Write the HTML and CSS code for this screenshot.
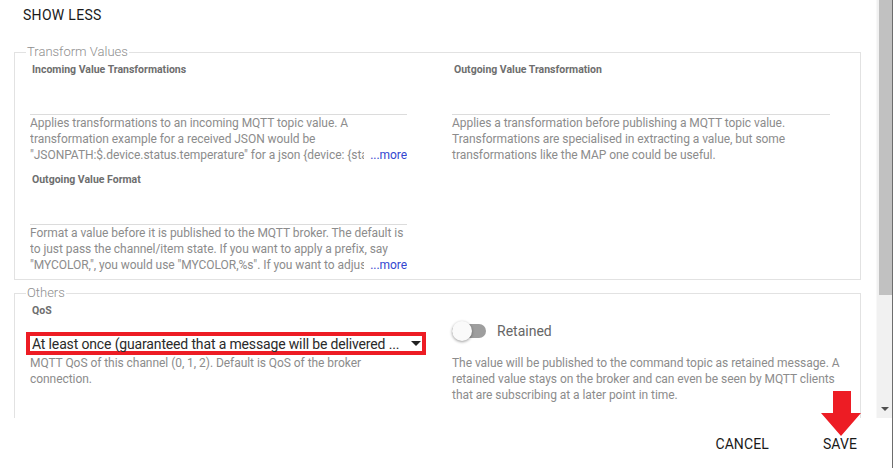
FILE: index.html
```html
<!DOCTYPE html>
<html lang="en">
  <head>
    <meta charset="UTF-8" />
    <meta name="viewport" content="width=device-width, initial-scale=1.0" />
    <title>Channel configuration</title>
    <link rel="stylesheet" href="styles.css">
  </head>
  <body>
    <div class="dialog">
      <div class="dialog-body">
        <div class="scroll-area">
          <button class="text-btn show-less">Show less</button>

          <fieldset class="group">
            <legend>Transform Values</legend>
            <div class="grid">
              <div class="field">
                <label>Incoming Value Transformations</label>
                <div class="input"></div>
                <p class="hint clamp">
                  Applies transformations to an incoming MQTT topic value. A
                  transformation example for a received JSON would be
                  "JSONPATH:$.device.status.temperature" for a json {device: {status: { temperature: 23.2 }}}.
                  <a class="more" href="#">...more</a>
                </p>
              </div>
              <div class="field">
                <label>Outgoing Value Transformation</label>
                <div class="input"></div>
                <p class="hint">
                  Applies a transformation before publishing a MQTT topic value.
                  Transformations are specialised in extracting a value, but some
                  transformations like the MAP one could be useful.
                </p>
              </div>
              <div class="field">
                <label>Outgoing Value Format</label>
                <div class="input"></div>
                <p class="hint clamp">
                  Format a value before it is published to the MQTT broker. The
                  default is to just pass the channel/item state. If you want to
                  apply a prefix, say "MYCOLOR,", you would use "MYCOLOR,%s". If you want to adjust
                  the precision of a number to for example 4 digits, you would use "%.4f".
                  <a class="more" href="#">...more</a>
                </p>
              </div>
            </div>
          </fieldset>

          <fieldset class="group">
            <legend>Others</legend>
            <div class="grid">
              <div class="field">
                <label>QoS</label>
                <div class="select">
                  <span class="select-value">At least once (guaranteed that a message will be delivered ...</span>
                  <span class="caret"></span>
                </div>
                <p class="hint">
                  MQTT QoS of this channel (0, 1, 2). Default is QoS of the broker
                  connection.
                </p>
              </div>
              <div class="field toggle-field">
                <div class="toggle-row">
                  <span class="switch"><span class="knob"></span></span>
                  <span class="toggle-label">Retained</span>
                </div>
                <p class="hint">
                  The value will be published to the command topic as retained message. A<br>
                  retained value stays on the broker and can even be seen by MQTT clients<br>
                  that are subscribing at a later point in time.
                </p>
              </div>
            </div>
          </fieldset>
        </div>

        <div class="scrollbar">
          <div class="thumb"></div>
          <div class="scroll-arrow"></div>
        </div>
      </div>

      <div class="actions">
        <button class="text-btn">Cancel</button>
        <button class="text-btn">Save</button>
      </div>

      <!-- red annotation arrow pointing at SAVE -->
      <svg class="pointer" width="40" height="45" viewBox="0 0 40 45">
        <polygon points="12,0 30,0 30,22 40,22 20,45 0,22 12,22" fill="#ed1c24" />
      </svg>
    </div>
  </body>
</html>
```

FILE: styles.css
```css
* {
  box-sizing: border-box;
}
body {
  margin: 0;
  font-family: Roboto, "Liberation Sans", sans-serif;
  background: white;
}
.dialog {
  position: relative;
  width: 893px;
  height: 468px;
  border-right: 1px solid #6d6d6d;
  background: white;
}
.dialog-body {
  display: flex;
  height: 418px;
}
.scroll-area {
  flex: 1;
  overflow: hidden;
  padding: 0 15px 0 14px;
}
.text-btn {
  font-family: inherit;
  font-size: 14px;
  font-weight: 400;
  text-transform: uppercase;
  letter-spacing: 0.1px;
  color: #1a1a1a;
  background: none;
  border: none;
  padding: 0 16px;
  min-width: 64px;
  height: 36px;
  line-height: 36px;
  cursor: pointer;
}
.show-less {
  display: block;
  height: auto;
  line-height: 16px;
  letter-spacing: 0.3px;
  padding: 7px 0 0 9px;
  min-width: 0;
}
.group {
  margin: 21px 0 0 0;
  padding: 2px 0 6px 15px;
  border: 1px solid #e2e2e2;
  min-width: 0;
}
.group + .group {
  margin-top: 5px;
  padding-bottom: 30px;
}
.group legend {
  font-size: 13px;
  line-height: 16px;
  font-weight: 300;
  color: #8e8e8e;
  padding: 0 1px;
  margin-left: -4px;
}
.grid {
  display: grid;
  grid-template-columns: 377px 378px;
  column-gap: 45px;
  row-gap: 9px;
}
.field label {
  display: block;
  font-size: 10.5px;
  line-height: 16px;
  font-weight: 700;
  color: #6e6e6e;
  padding-left: 2px;
}
.input {
  height: 37px;
  border-bottom: 1px solid #dcdcdc;
}
.hint {
  margin: 0;
  font-size: 12px;
  line-height: 16px;
  letter-spacing: -0.05px;
  color: #8c8c8c;
}
.clamp {
  position: relative;
  max-height: 48px;
  overflow: hidden;
}
.more {
  position: absolute;
  right: 0;
  bottom: 0;
  background: white;
  padding-left: 6px;
  line-height: 16px;
  color: #3346d0;
  text-decoration: none;
}
.select {
  display: flex;
  align-items: center;
  width: 400px;
  height: 23px;
  margin: 13px 0 0 -4px;
  padding: 0 1px 0 2px;
  border: 4px solid #ed1c24;
  font-size: 14px;
  letter-spacing: -0.15px;
  color: #2a2a2a;
}
.select-value {
  flex: 1;
  white-space: nowrap;
  overflow: hidden;
}
.caret {
  width: 0;
  height: 0;
  border-left: 5px solid transparent;
  border-right: 5px solid transparent;
  border-top: 5px solid #222;
  margin-left: 8px;
}
.toggle-field {
  padding-top: 18px;
}
.toggle-field .hint {
  white-space: nowrap;
}
.toggle-row {
  display: flex;
  align-items: center;
  height: 20px;
  margin-bottom: 14px;
}
.switch {
  position: relative;
  width: 34px;
  height: 14px;
  border-radius: 7px;
  background: #9e9e9e;
}
.knob {
  position: absolute;
  left: 0;
  top: -3px;
  width: 20px;
  height: 20px;
  border-radius: 50%;
  background: #fafafa;
  box-shadow: 0 1px 3px rgba(0, 0, 0, 0.4);
}
.toggle-label {
  margin-left: 11px;
  font-size: 14px;
  color: #666;
}
.scrollbar {
  display: flex;
  flex-direction: column;
  width: 16px;
  padding-left: 2px;
  background: #f1f1f1;
  border-left: 1px solid #f8f8f8;
}
.thumb {
  width: 13px;
  height: 295px;
  background: #c1c1c1;
}
.scroll-arrow {
  margin: auto 0 7px 2px;
  width: 0;
  height: 0;
  border-left: 4px solid transparent;
  border-right: 4px solid transparent;
  border-top: 4px solid #505050;
}
.actions {
  display: flex;
  justify-content: flex-end;
  gap: 22px;
  padding: 8px 19px 0 0;
}
.pointer {
  position: absolute;
  left: 821px;
  top: 391px;
}
```
